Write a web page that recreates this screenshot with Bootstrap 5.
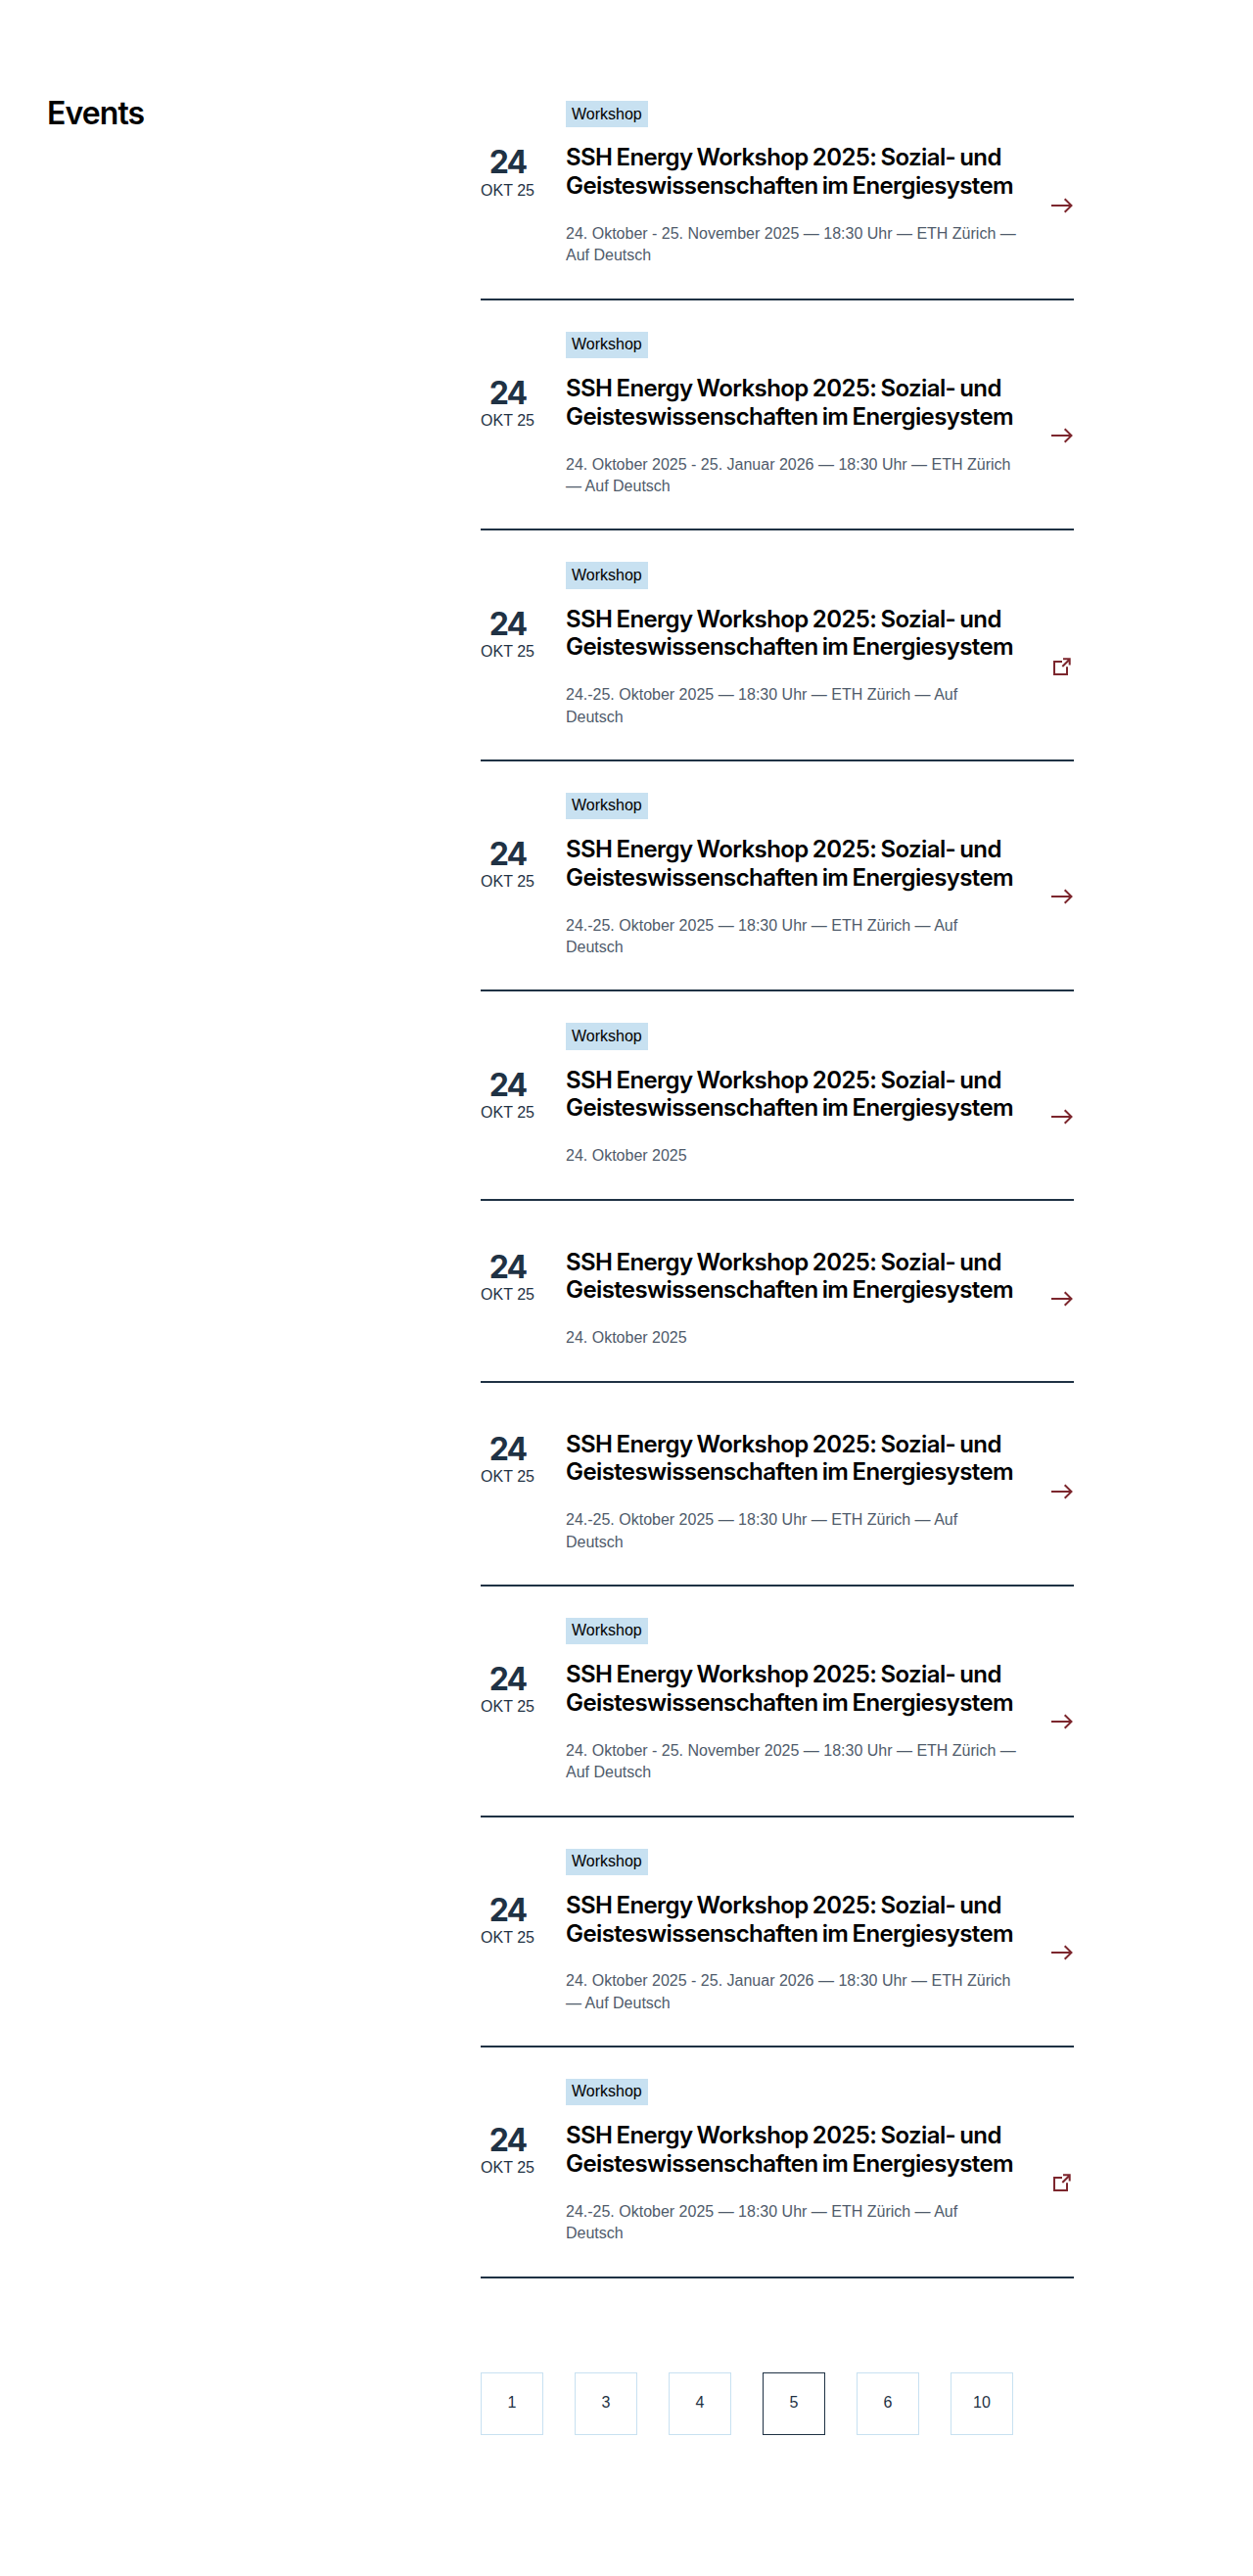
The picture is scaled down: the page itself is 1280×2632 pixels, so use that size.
<!DOCTYPE html>
<html lang="de">
<head>
<meta charset="utf-8">
<meta name="viewport" content="width=device-width, initial-scale=1">
<title>Events</title>
<link rel="stylesheet" href="https://cdn.jsdelivr.net/npm/bootstrap@5.3.0/dist/css/bootstrap.min.css">
<style>
  :root { --navy: #1f3244; --sky: #c8e1f1; --wine: #7c262d; --slate: #4f5b6b; }
  body { font: 16px/1.4 "Liberation Sans", Arial, sans-serif; color: #000; background: #fff; }
  .events-page { padding: 71.3px 0 144px 48px; }
  .events-side { width: 443px; }
  .events-title { font: 600 32px/38.4px Inter, sans-serif; letter-spacing: -.9px; margin-top: 26px; }
  .events-main { width: 606px; }
  .event { display: grid; grid-template-columns: 55px 463px 24px; grid-template-rows: auto auto; column-gap: 32px; row-gap: 16px; padding: 32px 0; border-bottom: 2px solid var(--navy); color: #000; }
  .event-top { grid-column: 2; }
  .event-tag { background: var(--sky); padding: 2.4px 6px; width: max-content; }
  .event-date { color: var(--navy); grid-column: 1; white-space: nowrap; padding-top: 2px; }
  .event-day { font: 700 32px/35.2px Inter, sans-serif; letter-spacing: -2px; }
  .event-title { font: 600 24px/28.8px Inter, sans-serif; letter-spacing: -.6px; word-spacing: -1.3px; padding-top: 1px; margin-bottom: 23px; white-space: nowrap; }
  .event-info { color: var(--slate); }
  .event-icon { fill: none; stroke: var(--wine); stroke-width: 2; }
  .event-pages { margin-top: 96px; gap: 32px; }
  .event-page { width: 64px; height: 64px; border: 1px solid var(--sky); color: var(--navy); }
  .event-page.current { border-color: var(--navy); }
</style>
<script src="https://cdn.jsdelivr.net/npm/bootstrap@5.3.0/dist/js/bootstrap.bundle.min.js"></script>
</head>
<body>
<svg class="d-none" aria-hidden="true">
  <symbol id="arrow" viewBox="0 0 24 24"><path d="M1 12H21.5M14.7 5.2 21.5 12 14.7 18.8"/></symbol>
  <symbol id="external" viewBox="0 0 24 24"><path d="M12 7H4V20H17V12.2M12.3 12 19.6 4.7M13 4.2H19.7V10.6"/></symbol>
</svg>
<main class="events-page d-flex">
  <div class="events-side flex-shrink-0"><h1 class="events-title mb-0">Events</h1></div>
  <div class="events-main flex-shrink-0">
    <div id="event-list"></div>
    <nav class="event-pages d-flex" aria-label="Seiten">
      <a class="event-page d-flex align-items-center justify-content-center text-decoration-none" href="#">1</a>
      <a class="event-page d-flex align-items-center justify-content-center text-decoration-none" href="#">3</a>
      <a class="event-page d-flex align-items-center justify-content-center text-decoration-none" href="#">4</a>
      <a class="event-page current d-flex align-items-center justify-content-center text-decoration-none" href="#" aria-current="page">5</a>
      <a class="event-page d-flex align-items-center justify-content-center text-decoration-none" href="#">6</a>
      <a class="event-page d-flex align-items-center justify-content-center text-decoration-none" href="#">10</a>
    </nav>
  </div>
</main>
<script>
  const autumn = '24. Oktober - 25. November 2025 — 18:30 Uhr — ETH Zürich — Auf Deutsch';
  const winter = '24. Oktober 2025 - 25. Januar 2026 — 18:30 Uhr — ETH Zürich — Auf Deutsch';
  const twoDays = '24.-25. Oktober 2025 — 18:30 Uhr — ETH Zürich — Auf Deutsch';
  const oneDay = '24. Oktober 2025';
  const events = [
    [autumn, true, 'arrow'], [winter, true, 'arrow'], [twoDays, true, 'external'], [twoDays, true, 'arrow'],
    [oneDay, true, 'arrow'], [oneDay, false, 'arrow'], [twoDays, false, 'arrow'],
    [autumn, true, 'arrow'], [winter, true, 'arrow'], [twoDays, true, 'external']
  ];
  document.getElementById('event-list').innerHTML = events.map(([info, tag, icon]) => `
    <a class="event text-decoration-none" href="#">
      <div class="event-top">${tag ? '<div class="event-tag">Workshop</div>' : ''}</div>
      <div class="event-date text-center"><div class="event-day">24</div><div>OKT 25</div></div>
      <div>
        <h2 class="event-title">SSH Energy Workshop 2025: Sozial- und<br>Geisteswissenschaften im Energiesystem</h2>
        <div class="event-info">${info}</div>
      </div>
      <svg class="event-icon align-self-center" width="24" height="24" aria-hidden="true"><use href="#${icon}"/></svg>
    </a>`).join('');
</script>
</body>
</html>
